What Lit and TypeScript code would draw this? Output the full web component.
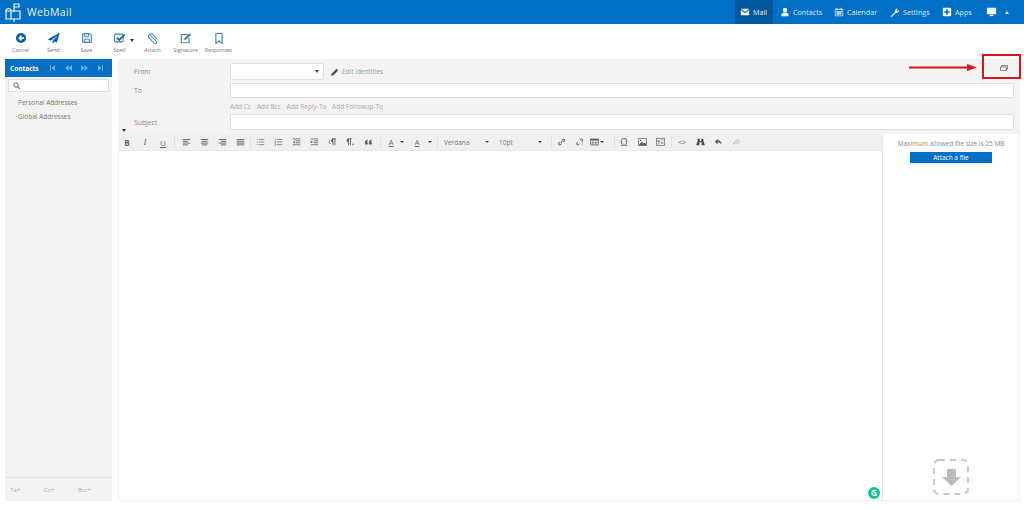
import { LitElement, html, css, svg } from "lit";
import { customElement } from "lit/decorators.js";

const ic = (w: number, h: number, body: unknown, cls = "") =>
  html`<svg class=${cls} width=${w} height=${h} viewBox="0 0 ${w} ${h}" aria-hidden="true">${body}</svg>`;

const tbIcons: Record<string, unknown> = {
  cancel: ic(14, 14, svg`<circle cx="7" cy="7" r="6.500" fill="#0f63a5"/><path d="M11 7H5.500M7.600 4.200 4.800 7l2.800 2.800" fill="none" stroke="#fff" stroke-width="2"/>`),
  send: ic(16, 14, svg`<path d="M15.500 0 0 8.500l4 2L13 3 6 11v3l2.500-2.500 3 1.500z" fill="#0f63a5"/>`),
  save: ic(14, 14, svg`<path d="M1.500 1.500h9l2 2v9h-11z" fill="#fff" stroke="#3f7fb2" stroke-width="1.400"/><path d="M4 1.500h5v4H4zM4 8.500h6v4H4z" fill="none" stroke="#3f7fb2" stroke-width="1.200"/>`),
  spell: ic(16, 14, svg`<rect x="1" y="2" width="11" height="10" rx="1.500" fill="none" stroke="#3f7fb2" stroke-width="1.400"/><path d="M4 6.500 7 9.500 14 2.500" fill="none" stroke="#0f63a5" stroke-width="2.200"/>`),
  attach: ic(14, 15, svg`<path d="M3 3.500 10.500 11.500a1.900 1.900 0 0 1-2.800 2.600L1.600 7.400A3 3 0 0 1 2 2.600c1.200-1.200 3-1 4 .1l6 6.300" transform="translate(.6 -.5)" fill="none" stroke="#3f7fb2" stroke-width="1.300"/>`),
  signature: ic(16, 14, svg`<path d="M10 2.500H2v10.500h10V7" fill="none" stroke="#3f7fb2" stroke-width="1.400"/><path d="M5.500 9.500 6 7.200 12.500 1l2 2L8 9z" fill="#3f7fb2"/>`),
  responses: ic(12, 15, svg`<path d="M2 1h8v13L6 10.500 2 14z" fill="none" stroke="#3f7fb2" stroke-width="1.400"/>`),
};

const G = "#555";
const lines = (rows: [number, number][], col = G) =>
  ic(12, 10, rows.map(([x, w], i) => svg`<rect x=${x} y=${1 + i * 2.4} width=${w} height="1.3" fill=${col}/>`));

const ed: Record<string, unknown> = {
  left: lines([[1, 10], [1, 7], [1, 10], [1, 7]]),
  center: lines([[1, 10], [2.5, 7], [1, 10], [2.5, 7]]),
  right: lines([[1, 10], [4, 7], [1, 10], [4, 7]]),
  justify: lines([[1, 10], [1, 10], [1, 10], [1, 10]]),
  ul: ic(12, 10, svg`<path d="M4 1.500h7M4 5h7M4 8.500h7" stroke=${G}/><path d="M1 1h1.500v1H1zM1 4.500h1.500v1H1zM1 8h1.500v1H1z" fill=${G}/>`),
  ol: ic(12, 10, svg`<path d="M4 1.500h7M4 5h7M4 8.500h7" stroke=${G}/><path d="M1.500 .5v2.400M1 4.500h1.500L1 6.400h1.500M1 7.800h1.500v1.800H1" stroke=${G} stroke-width=".7" fill="none"/>`),
  outdent: ic(12, 10, svg`<path d="M1 1h10M5 3.500h6M5 6h6M1 8.700h10" stroke=${G} stroke-width="1.200"/><path d="M4 3v4L1 5z" fill=${G}/>`),
  indent: ic(12, 10, svg`<path d="M1 1h10M5 3.500h6M5 6h6M1 8.700h10" stroke=${G} stroke-width="1.200"/><path d="M1 3v4l3-2z" fill=${G}/>`),
  ltr: ic(11, 10, svg`<path d="M5 1h5M6 1v8M8.500 1v8" stroke="#444" stroke-width="1.100"/><path d="M6 1C3 1 3 5.500 6 5.500z" fill="#444"/><path d="M3 2.500 1 5l2 2.500" fill="none" stroke="#444"/>`),
  rtl: ic(11, 10, svg`<path d="M2 1h5M3 1v8M5.500 1v8" stroke="#444" stroke-width="1.100"/><path d="M3 1C0 1 0 5.500 3 5.500z" fill="#444"/><path d="M8 6.500 10 8 8 9.500z" fill="#444"/>`),
  quote: ic(11, 10, svg`<path d="M1 5.500C1 3.500 2.500 2.500 4.500 2.300v1.300C3.500 3.800 3 4.200 3 4.800h1.500V8H1zM6 5.500C6 3.500 7.500 2.500 9.500 2.300v1.300C8.500 3.800 8 4.200 8 4.800h1.500V8H6z" fill="#444"/>`),
  link: ic(12, 12, svg`<path d="M5 7 7.500 4.500M3.500 6 2 7.500a1.800 1.800 0 0 0 2.500 2.500L6 8.500M6.500 3.500 8 2a1.800 1.800 0 0 1 2.500 2.500L9 6" fill="none" stroke="#555" stroke-width="1.600"/>`),
  unlink: ic(12, 12, svg`<path d="M3.500 6 2 7.500a1.800 1.800 0 0 0 2.500 2.500L6 8.500M6.500 3.500 8 2a1.800 1.800 0 0 1 2.500 2.500L9 6" fill="none" stroke="#666" stroke-width="1.600"/><path d="M9 9.500 11 11M7 1V0M10 7.500h1.500" stroke="#666" stroke-width="1"/>`),
  table: ic(12, 10, svg`<path d="M.5 1h11v8H.5z" fill="none" stroke="#444"/><path d="M.5 1h11v2H.5z" fill="#444"/><path d="M4 3v6M8 3v6M.5 6h11" stroke="#444" stroke-width=".8"/>`),
  image: ic(12, 10, svg`<rect x=".5" y=".5" width="11" height="9" fill="none" stroke="#555"/><path d="M1 9 5 4.500 7.500 7 9 5.500 11 8v1.500H1z" fill="#444"/><circle cx="3.500" cy="3" r="1" fill="#555"/>`),
  media: ic(12, 10, svg`<rect x=".5" y=".5" width="11" height="9" fill="none" stroke="#555"/><path d="M2 3h3.500v1.500H2zM6.500 5.500H10V7H6.500z" fill="#555"/><path d="M7 2.500h3M2 6h3M2 7.500h3" stroke="#555" stroke-width=".7"/>`),
  bino: ic(12, 11, svg`<path d="M2 1h3v3h2V1h3v3l2 6H7.500V6h-3v4H0l2-6z" fill="#333"/>`),
  undo: ic(12, 10, svg`<path d="M5 1 1 4.500 5 8V5.700c2.500 0 4 .8 5 3 .3-3.500-1.500-6-5-6z" fill="#444"/>`),
  redo: ic(12, 10, svg`<path d="M7 1.500 11 4.500 7 7.500V5.500c-2.500 0-4 .8-5 3 .2-3.300 2-5 5-5z" fill="none" stroke="#aaa" stroke-width=".9"/>`),
};

const caret = html`<span class="caret"></span>`;
const sep = (cls: string) => html`<span class="sep ${cls}"></span>`;

@customElement("app-root")
export class AppRoot extends LitElement {
  static styles = css`
    :host { display: block; width: 1024px; height: 510px; position: relative; overflow: hidden; background: #fff; font-family: "Open Sans", sans-serif; color: #777; }
    * { box-sizing: border-box; }
    svg { display: block; flex: none; }

    .topbar { height: 24px; background: #0070c4; display: flex; align-items: stretch; color: #fff; }
    .brand { display: flex; align-items: center; gap: 5px; padding-left: 4px; font-size: 10.500px; letter-spacing: .35px; color: #e6f1fa; width: 735px; }
    .navitem { display: flex; align-items: center; gap: 3px; font-size: 7.200px; color: #dcebf7; padding-left: 5px; }
    .navitem svg { transform: scale(.88); }
    .navitem.on { background: #00589c; width: 38px; color: #e8f1f8; }
    .n-contacts { width: 54px; margin-left: 2px; }
    .n-cal { width: 55px; }
    .n-set { width: 53px; }
    .n-apps { width: 44px; }
    .n-mon { width: 24px; }
    .up { width: 0; height: 0; border: 2.500px solid transparent; border-top: 0; border-bottom: 3px solid #fff; align-self: center; }

    .actions { height: 35px; display: flex; padding: 6px 0 0 4px; }
    .act { width: 33px; display: flex; flex-direction: column; align-items: center; font-size: 5.500px; color: #777; position: relative; }
    .act .i { height: 16px; display: flex; align-items: center; }
    .act .i svg { transform: scale(.78); }
    .act .lbl { white-space: nowrap; line-height: 8px; }
    .act .sp { position: absolute; left: 27px; top: 9px; width: 0; height: 0; border: 2.500px solid transparent; border-top: 3px solid #333; border-bottom: 0; }

    .body { display: flex; height: 442px; padding-left: 5px; gap: 6px; }

    .side { width: 107px; background: #f3f3f3; display: flex; flex-direction: column; }
    .sidehead { height: 18px; background: #0070c4; display: flex; align-items: center; color: #fff; font-size: 6.500px; font-weight: 700; padding-left: 5px; }
    .sidehead .t { width: 40px; }
    .pg { display: flex; gap: 9.500px; align-items: center; }
    .search { margin: 2px 3px 0 3px; height: 13px; background: #fff; border: 1px solid #ddd; display: flex; align-items: center; padding-left: 4px; }
    .tree { padding: 3px 0 0 13px; font-size: 6.500px; color: #777; flex: 1; }
    .tree div { height: 14.500px; display: flex; align-items: center; }
    .sidefoot { height: 24px; border-top: 1px solid #e4e4e4; display: flex; align-items: center; padding-left: 5px; font-size: 6px; color: #aaa; }
    .sidefoot span { width: 34.500px; }

    .main { width: 902px; display: flex; flex-direction: column; }
    .form { height: 75px; background: #f3f3f3; display: grid; grid-template-columns: 112px 1fr; grid-template-rows: 20px 15px 16px 16px; align-content: start; padding: 4px 6px 0 0; position: relative; }
    .flabel { font-size: 6.800px; color: #888; padding-left: 16px; display: flex; align-items: center; }
    .flabel.first { height: 17px; }
    .from { display: flex; align-items: flex-start; gap: 7px; }
    .select { width: 94px; height: 17px; background: #fff; border: 1px solid #e0e0e0; border-radius: 2px; position: relative; }
    .select::after { content: ""; position: absolute; right: 4px; top: 6px; border: 2px solid transparent; border-top: 3px solid #444; border-bottom: 0; }
    .edit { display: flex; align-items: center; gap: 3px; font-size: 6.500px; color: #999; height: 17px; }
    .input { background: #fff; border: 1px solid #e0e0e0; }
    .links { display: flex; gap: 5.700px; align-items: center; font-size: 6.500px; color: #aaa; }
    .collapse { position: absolute; left: 4px; bottom: 2px; border: 2.500px solid transparent; border-top: 3px solid #333; border-bottom: 0; }
    .restore { position: absolute; right: 12px; top: 6px; }

    .etb { height: 17px; background: #f0f0f0; border-bottom: 1px solid #e8e8e8; display: flex; align-items: center; width: 765px; }
    .b { width: 18px; display: flex; justify-content: center; align-items: center; height: 16px; color: #666; font-size: 8px; font-family: "Open Sans", sans-serif; flex: none; }
    .b svg { width: 9px; height: 8px; opacity: .85; }
    .b .it { font-family: "Liberation Serif", serif; font-size: 9px; font-style: italic; }
    .sep { width: 1px; height: 13px; background: #e0e0e0; flex: none; }
    .m-l2 { margin-left: 2px; }
    .m-l1 { margin-left: 1px; }
    .m-l3 { margin-left: 3px; }
    .m-l8 { margin-left: 8px; }
    .m-r1 { margin-right: 1px; }
    .m-r2 { margin-right: 2px; }
    .m-r3 { margin-right: 3px; }
    .caret { width: 0; height: 0; border: 2px solid transparent; border-top: 2.500px solid #444; border-bottom: 0; flex: none; }
    .b.color { width: 14px; text-decoration: underline; font-size: 7.500px; }
    .cr-a { margin-left: 2px; margin-right: 6px; }
    .cr-b { margin-left: 4px; margin-right: 4px; }
    .pick { display: flex; align-items: center; font-size: 6.500px; color: #777; justify-content: space-between; padding-left: 6px; height: 16px; flex: none; }
    .pick.f { width: 55px; padding-right: 4px; }
    .pick.s { width: 58px; padding-right: 9px; }
    .b.tbl { gap: 1px; }
    .b.om { font-size: 10px; font-family: "Liberation Sans", sans-serif; }
    .b.code { font-size: 7px; }

    .work { display: flex; flex: 1; border: 1px solid #eee; border-top: 0; margin-top: -17px; }
    .editor { width: 764px; padding-top: 17px; border-right: 1px solid #e6e6e6; position: relative; }
    .grammarly { position: absolute; right: 2px; bottom: 1px; width: 12px; height: 12px; border-radius: 50%; background: #15c39a; color: #fff; font: 700 8px/12px "Open Sans", sans-serif; text-align: center; }
    .attach { flex: 1; display: flex; flex-direction: column; align-items: center; padding: 5px 0 5px; background: #fff; }
    .max { font-size: 6.500px; color: #888; line-height: 9px; white-space: nowrap; }
    .btn { margin-top: 4px; width: 82px; height: 11px; background: #0070c4; color: #fff; font-size: 6.500px; text-align: center; line-height: 11px; }
    .drop { margin-top: auto; }

    .callout { position: absolute; left: 982px; top: 54px; width: 39px; height: 25px; border: 2px solid #d8141c; }
    .arrow { position: absolute; left: 909px; top: 63px; }
  `;

  private act(icon: string, label: string, sp = false) {
    return html`<div class="act"><div class="i">${tbIcons[icon]}</div><div class="lbl">${label}</div>${sp ? html`<span class="sp"></span>` : ""}</div>`;
  }
  private b(k: unknown) { return html`<div class="b">${k}</div>`; }

  render() {
    const w = "#f2f7fb";
    return html`
      <div class="topbar">
        <div class="brand">
          ${ic(18, 19, svg`<path d="M2 8h5v8H2zM7 8h9v8H7z" fill="none" stroke="${w}" stroke-width="1.200"/><path d="M2 8a2.500 2.500 0 0 1 5 0" fill="none" stroke="${w}" stroke-width="1.200"/><path d="M10 1v8M10 1h5v3h-5" fill="none" stroke="${w}" stroke-width="1.200"/><path d="M10 16v3" stroke="${w}" stroke-width="1.200"/>`)}
          <span>WebMail</span>
        </div>
        <div class="navitem on">${ic(10, 8, svg`<path d="M0 0h10L5 4zM0 1.500 5 5.500l5-4V8H0z" fill="${w}"/>`)}<span>Mail</span></div>
        <div class="navitem n-contacts">${ic(10, 10, svg`<circle cx="5" cy="2.700" r="2.500" fill="${w}"/><path d="M1 10V7.500C1 6 3 5.500 5 5.500s4 .5 4 2V10z" fill="${w}"/>`)}<span>Contacts</span></div>
        <div class="navitem n-cal">${ic(10, 10, svg`<path d="M.5 2h9v7.500h-9z" fill="none" stroke="${w}"/><path d="M2.500 0v3M7.500 0v3" stroke="${w}"/><path d="M2 4h6v4H2z" fill="${w}" opacity=".7"/>`)}<span>Calendar</span></div>
        <div class="navitem n-set">${ic(11, 11, svg`<path d="M1 10 6 5C5.500 3 7 .8 9.500 1L8 2.800 9 4l1.800-1.200C11 5 8.500 6.500 6.800 6L2 11z" fill="${w}"/>`)}<span>Settings</span></div>
        <div class="navitem n-apps">${ic(10, 10, svg`<rect width="10" height="10" rx="1.500" fill="${w}"/><path d="M5 2v6M2 5h6" stroke="#0070c4" stroke-width="1.800"/>`)}<span>Apps</span></div>
        <div class="navitem n-mon">${ic(11, 10, svg`<path d="M0 0h11v7.500H0z" fill="${w}"/><path d="M3.500 9h4" stroke="${w}" stroke-width="1.500"/>`)}</div>
        <span class="up"></span>
      </div>

      <div class="actions">
        ${this.act("cancel", "Cancel")}${this.act("send", "Send")}${this.act("save", "Save")}${this.act("spell", "Spell", true)}${this.act("attach", "Attach")}${this.act("signature", "Signature")}${this.act("responses", "Responses")}
      </div>

      <div class="body">
        <div class="side">
          <div class="sidehead">
            <span class="t">Contacts</span>
            <div class="pg">
              ${ic(5, 6, svg`<path d="M0 0h1v6H0zM5 0v6L1.500 3z" fill="#6fb0e0"/>`)}
              ${ic(7, 6, svg`<path d="M3.500 0v6L0 3zM7 0v6L3.500 3z" fill="#6fb0e0"/>`)}
              ${ic(7, 6, svg`<path d="M0 0v6l3.500-3zM3.500 0v6L7 3z" fill="#6fb0e0"/>`)}
              ${ic(5, 6, svg`<path d="M0 0v6l3.500-3zM4 0h1v6H4z" fill="#6fb0e0"/>`)}
            </div>
          </div>
          <div class="search">${ic(7, 7, svg`<circle cx="3" cy="3" r="2.200" fill="none" stroke="#666"/><path d="M4.500 4.500 7 7" stroke="#666" stroke-width="1.100"/>`)}</div>
          <div class="tree"><div>Personal Addresses</div><div>Global Addresses</div></div>
          <div class="sidefoot"><span>To+</span><span>Cc+</span><span>Bcc+</span></div>
        </div>

        <div class="main">
          <div class="form">
            <div class="flabel first">From</div>
            <div class="from"><div class="select"></div>
              <div class="edit">${ic(8, 8, svg`<path d="M0 8 .8 5.500 5.500.8 7.200 2.500 2.500 7.200z" fill="#555"/>`)}<span>Edit identities</span></div>
            </div>
            <div class="flabel">To</div><div class="input"></div>
            <div></div>
            <div class="links"><span>Add Cc</span><span>Add Bcc</span><span>Add Reply-To</span><span>Add Followup-To</span></div>
            <div class="flabel">Subject</div><div class="input"></div>
            <span class="collapse"></span>
            <div class="restore">${ic(8, 6, svg`<path d="M.4 2h6v3.600h-6z" fill="none" stroke="#666" stroke-width=".8"/><path d="M1.700 2V.4h6v3.600H6.400" fill="none" stroke="#666" stroke-width=".8"/>`)}</div>
          </div>
          <div class="etb">
            <div class="b"><b>B</b></div><div class="b"><span class="it">I</span></div><div class="b"><u>U</u></div>
            ${sep("m-l2 m-r2")}
            ${this.b(ed.left)}${this.b(ed.center)}${this.b(ed.right)}${this.b(ed.justify)}
            ${sep("m-l1")}
            ${this.b(ed.ul)}${this.b(ed.ol)}${this.b(ed.outdent)}${this.b(ed.indent)}${this.b(ed.ltr)}${this.b(ed.rtl)}${this.b(ed.quote)}
            ${sep("m-l3 m-r3")}
            <div class="b color">A</div><span class="caret cr-a"></span>
            <div class="b color">A</div><span class="caret cr-b"></span>
            ${sep("m-l1")}
            <div class="pick f"><span>Verdana</span>${caret}</div>
            <div class="pick s"><span>10pt</span>${caret}</div>
            ${sep("")}
            ${this.b(ed.link)}${this.b(ed.unlink)}
            <div class="b tbl">${ed.table}${caret}</div>
            ${sep("m-l8")}
            <div class="b om">Ω</div>${this.b(ed.image)}${this.b(ed.media)}
            ${sep("m-l2 m-r1")}
            <div class="b code">&lt;&gt;</div>${this.b(ed.bino)}${this.b(ed.undo)}${this.b(ed.redo)}
          </div>
          <div class="work">
            <div class="editor"><div class="grammarly">G</div></div>
            <div class="attach">
              <div class="max">Maximum allowed file size is 25 MB</div>
              <div class="btn">Attach a file</div>
              <div class="drop">${ic(36, 36, svg`<rect x="1" y="1" width="34" height="34" rx="5" fill="none" stroke="#c8c8c8" stroke-width="2" stroke-dasharray="6 5"/><path d="M14 10h9v8h5L18.500 27 9 18h5z" fill="#bbb"/>`)}</div>
            </div>
          </div>
        </div>
      </div>

      <div class="callout"></div>
      <div class="arrow">${ic(68, 9, svg`<path d="M0 4.500h60" stroke="#d8141c" stroke-width="1.800"/><path d="M58 1l10 3.500L58 8z" fill="#d8141c"/>`)}</div>
    `;
  }
}
